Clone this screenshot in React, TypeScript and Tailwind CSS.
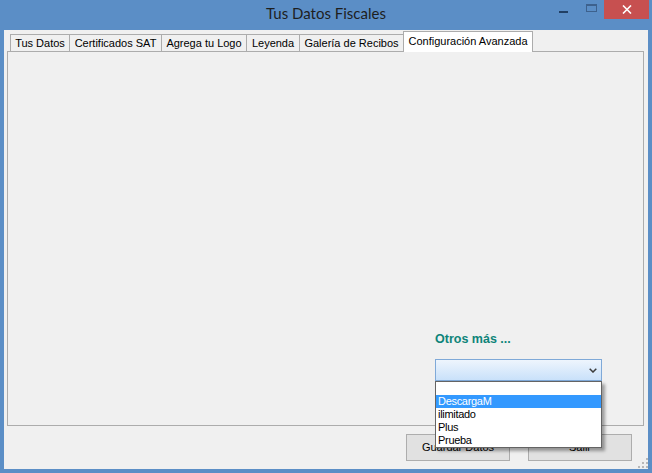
import React from 'react';

const tabs = [
  { name: 'Tus Datos', w: 'w-[60px]' },
  { name: 'Certificados SAT', w: 'w-[93px]' },
  { name: 'Agrega tu Logo', w: 'w-[86px]' },
  { name: 'Leyenda', w: 'w-[54px]' },
  { name: 'Galería de Recibos', w: 'w-[105px]' },
];

const options = ['', 'DescargaM', 'ilimitado', 'Plus', 'Prueba'];

export default function App() {
  const sans = { fontFamily: '"Liberation Sans", Arial, sans-serif' };

  return (
    <div className="w-[652px] h-[473px] bg-[#5b8ec6] flex flex-col overflow-hidden" style={sans}>
      {/* Title bar */}
      <div className="h-[30px] grid grid-cols-[1fr_auto_1fr] shrink-0">
        <div />
        <div
          className="pt-[3px] text-[15px] leading-[20px] text-[#1e1e1e]"
          style={{ fontFamily: 'Lato, "Liberation Sans", sans-serif' }}
        >
          Tus Datos Fiscales
        </div>
        <div className="flex items-start justify-end pr-[3px]">
          <div className="w-[9px] h-[2px] bg-[#213f63] mt-[11px]" />
          <div className="w-[11px] h-[8px] border border-t-2 border-[#3d618d] mt-[4px] ml-[18px]" />
          <div className="w-[45px] h-[19px] bg-[#c75050] ml-[7px] flex items-center justify-center">
            <svg width="10" height="9" viewBox="0 0 10 9">
              <path d="M1 0.5 L9 8.5 M9 0.5 L1 8.5" stroke="#fff" strokeWidth="1.6" />
            </svg>
          </div>
        </div>
      </div>

      {/* Client area */}
      <div className="relative mx-[4px] h-[439px] bg-[#f0f0f0] flex flex-col text-[11px] text-black">
        {/* Tab strip */}
        <div className="flex items-end h-[20px] mt-[1px] pl-[6px]">
          {tabs.map((t, i) => (
            <div
              key={t.name}
              className={`${t.w} ${i > 0 ? '-ml-px' : ''} h-[17px] border border-b-0 border-[#acacac] bg-[#f0f0f0] flex items-center justify-center leading-none`}
            >
              {t.name}
            </div>
          ))}
          <div className="w-[130px] -ml-px h-[21px] -mb-px relative z-10 border border-b-0 border-[#acacac] bg-white flex items-center justify-center leading-none pb-[2px]">
            Configuración Avanzada
          </div>
        </div>

        {/* Tab page */}
        <div className="ml-[3px] w-[637px] h-[375px] border border-[#acacac] flex flex-col items-end justify-end pr-[41px] pb-[44px]">
          <div className="w-[167px] flex flex-col">
            <div className="text-[12.5px] font-bold leading-[14px] text-[#0e8479] mb-[13px]">Otros más ...</div>
            <div className="relative">
              <div className="h-[22px] border border-[#7fa9d8] bg-gradient-to-b from-[#eef5fd] to-[#c9e1fa] flex items-center justify-end pr-[4px]">
                <svg width="8" height="5" viewBox="0 0 8 5">
                  <path d="M0.7 0.7 L4 4 L7.3 0.7" stroke="#3c3c3c" strokeWidth="1.5" fill="none" />
                </svg>
              </div>
              {/* Open list */}
              <div className="absolute left-0 top-[22px] w-[167px] z-20 bg-white border border-[#646464] shadow-[3px_3px_3px_rgba(0,0,0,0.35)] flex flex-col">
                {options.map((o) => (
                  <div
                    key={o || 'blank'}
                    className={`h-[13px] leading-[13px] pl-[2px] tracking-[-0.3px] ${
                      o === 'DescargaM' ? 'bg-[#3399ff] text-white' : ''
                    }`}
                  >
                    {o}
                  </div>
                ))}
              </div>
            </div>
          </div>
        </div>

        {/* Buttons */}
        <div className="flex justify-end gap-[18px] pr-[16px] mt-[8px]">
          <button className="w-[104px] h-[27px] border border-[#adadad] bg-[#e1e1e1] leading-none">Guardar Datos</button>
          <button className="w-[104px] h-[27px] border border-[#adadad] bg-[#e1e1e1] leading-none">Salir</button>
        </div>

        {/* Size grip */}
        <svg className="absolute right-0 bottom-px" width="10" height="10" viewBox="0 0 10 10">
          <g fill="#b8b8b8">
            <rect x="8" y="0" width="2" height="2" />
            <rect x="4" y="4" width="2" height="2" />
            <rect x="8" y="4" width="2" height="2" />
            <rect x="0" y="8" width="2" height="2" />
            <rect x="4" y="8" width="2" height="2" />
            <rect x="8" y="8" width="2" height="2" />
          </g>
        </svg>
      </div>
    </div>
  );
}
